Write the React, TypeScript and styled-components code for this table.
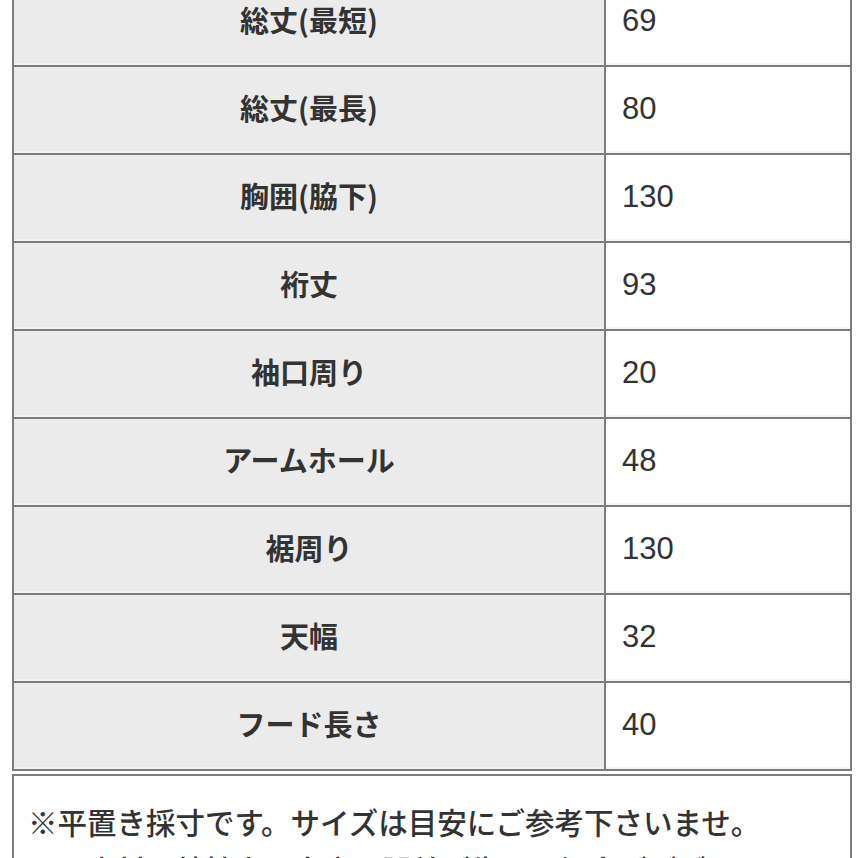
import React from 'react'
import styled, { createGlobalStyle } from 'styled-components'

const GlobalStyle = createGlobalStyle`
    html, body {
        margin: 0;
        padding: 0;
        background: #ffffff;
    }
    body {
        font-family: "Noto Sans CJK JP", "Liberation Sans", sans-serif;
        color: #333333;
        overflow: hidden;
    }
`

const sizes = [
    { label: '総丈(最短)', value: '69' },
    { label: '総丈(最長)', value: '80' },
    { label: '胸囲(脇下)', value: '130' },
    { label: '裄丈', value: '93' },
    { label: '袖口周り', value: '20' },
    { label: 'アームホール', value: '48' },
    { label: '裾周り', value: '130' },
    { label: '天幅', value: '32' },
    { label: 'フード長さ', value: '40' },
]

const App = () => {
    return (
        <>
            <GlobalStyle />
            <Page>
                <SizeTable>
                    {sizes.map((row) => (
                        <React.Fragment key={row.label}>
                            <LabelCell>{row.label}</LabelCell>
                            <ValueCell>{row.value}</ValueCell>
                        </React.Fragment>
                    ))}
                </SizeTable>
                <NoteBox>
                    <NoteLine>※平置き採寸です。サイズは目安にご参考下さいませ。</NoteLine>
                    <NoteLine>　※素材の特性上、多少の誤差が生じる場合がございます。</NoteLine>
                </NoteBox>
            </Page>
        </>
    )
}

const Page = styled.div`
    margin-top: -23px;
    padding: 0 6px 0 12px;
    display: flex;
    flex-direction: column;
    gap: 3px;
`

const SizeTable = styled.div`
    display: grid;
    grid-template-columns: 592px 1fr;
    border: 2px solid #7d7d7d;
    border-bottom: none;
`

const Cell = styled.div`
    box-sizing: border-box;
    height: 88px;
    display: flex;
    align-items: center;
    border-bottom: 2px solid #7d7d7d;
    box-shadow: inset 0 -2px 0 #f4f4f4;
`

const LabelCell = styled(Cell)`
    justify-content: center;
    background: #ebebeb;
    border-right: 2px solid #7d7d7d;
    font-family: "Noto Sans CJK JP", sans-serif;
    font-weight: 700;
    font-size: 29px;
    color: #333333;
    padding-bottom: 6px;
`

const ValueCell = styled(Cell)`
    padding-left: 16px;
    background: #ffffff;
    font-family: "Liberation Sans", Arial, sans-serif;
    font-size: 31px;
    color: #333333;
    padding-bottom: 2px;
`

const NoteBox = styled.div`
    border: 2px solid #7d7d7d;
    padding: 21px 14px;
    display: flex;
    flex-direction: column;
`

const NoteLine = styled.div`
    font-family: "Noto Sans CJK JP", sans-serif;
    font-weight: 500;
    font-size: 29.5px;
    line-height: 48px;
    color: #333333;
    white-space: nowrap;
`

export default App
